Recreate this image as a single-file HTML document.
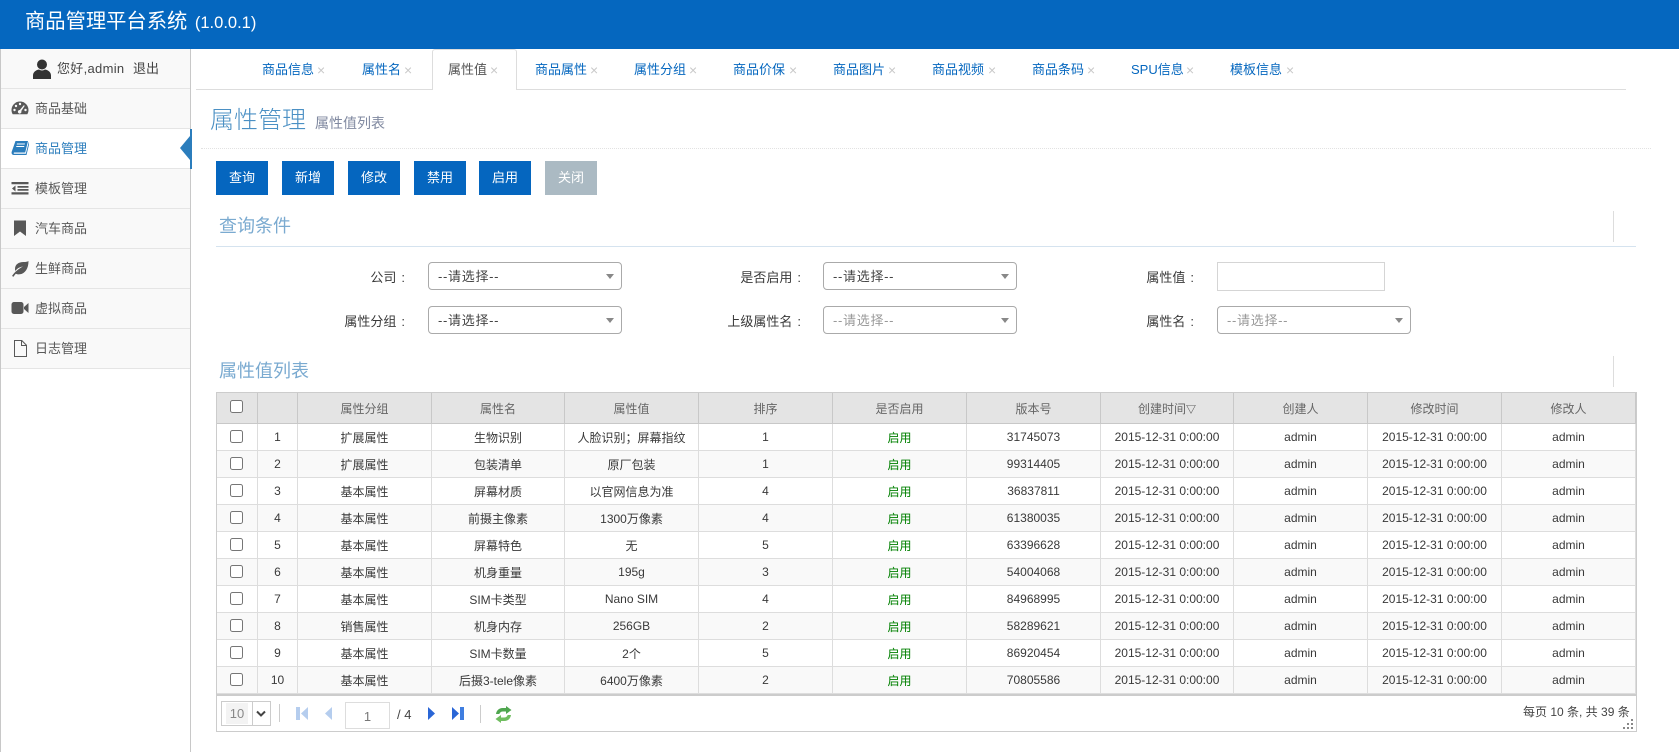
<!DOCTYPE html>
<html lang="zh">
<head>
<meta charset="utf-8">
<title>商品管理平台系统</title>
<style>
html,body{margin:0;padding:0;width:1679px;height:752px;overflow:hidden;background:#fff;}
body{position:relative;font-family:"Liberation Sans","WenQuanYi Zen Hei","Noto Sans CJK SC",sans-serif;font-size:13px;color:#393939;}
.a{position:absolute;white-space:nowrap;}
.hdr{left:0;top:0;width:1679px;height:49px;background:#0567bf;}
.brand{left:25px;top:8px;font-size:20.300px;line-height:28px;color:#fff;}
.side{left:0;top:49px;height:703px;border-left:1px solid #c8c8c8;border-right:1px solid #c8c8c8;width:189px;}
.mi{left:1px;width:189px;height:39px;background:#f9f9f9;border-bottom:1px solid #e5e5e5;line-height:38px;color:#585858;}
.mi span{position:absolute;left:34px;top:1px;}
.mi svg{position:absolute;left:10px;top:10px;width:18px;height:18px;fill:#585858;}
.mi.on{background:#fff;color:#2b7dbc;}
.mi.on svg{fill:#2b7dbc;}
.tabline{left:196px;top:89px;width:1430px;height:1px;background:#ddd;}
.tabon{left:432px;top:49px;width:85px;height:41px;box-sizing:border-box;background:#fff;border:1px solid #ddd;border-bottom:0;border-radius:3px 3px 0 0;}
.t{top:61px;line-height:18px;font-size:13px;color:#0567bf;}
.x{top:61px;line-height:19px;font-size:14px;color:#c9c9c9;}
.h1{left:210px;top:104px;font-size:24px;line-height:34px;color:#4b90c4;font-weight:300;}
.h2{left:315px;top:113px;font-size:14px;line-height:20px;color:#8089a0;}
.dot{left:201px;top:148px;width:1450px;height:0;border-top:1px dotted #e2e2e2;}
.b{top:161px;height:34px;width:52px;background:#0566bf;color:#fff;text-align:center;line-height:33px;font-size:13px;}
.sec{left:219px;font-size:18px;line-height:26px;color:#7aaad0;}
.vl{left:1613px;width:1px;background:#ddd;}
.lb{line-height:18px;font-size:13px;color:#393939;text-align:right;width:100px;}
.lb s{text-decoration:none;margin-left:5px;}
.sel{height:28px;box-sizing:border-box;border:1px solid #aaa;border-radius:4px;background:#fff;line-height:27px;padding-left:9px;color:#444;font-size:13px;letter-spacing:.7px;}
.sel.d{color:#999;}
.sel i{position:absolute;right:7px;top:11px;width:0;height:0;border-left:4px solid transparent;border-right:4px solid transparent;border-top:5px solid #888;}
.inp{left:1217px;top:262px;width:168px;height:29px;box-sizing:border-box;border:1px solid #d5d5d5;background:#fff;}
.grid{left:216px;top:392px;width:1419px;height:338px;border:1px solid #ccc;background:#fff;}
table{border-collapse:separate;border-spacing:0;table-layout:fixed;width:1419px;font-size:12px;}
th,td{padding:0;text-align:center;box-sizing:border-box;overflow:hidden;white-space:nowrap;}
th{height:31px;background:#e4e4e4;color:#666;font-weight:400;border-right:1px solid #c8c8c8;border-bottom:1px solid #c8c8c8;}
td{height:27px;color:#393939;border-right:1px solid #ddd;border-bottom:1px solid #ddd;}
tr:nth-child(even) td{background:#f9f9f9;}
td.g{color:#008000;}
input[type=checkbox]{margin:0;width:13px;height:13px;vertical-align:middle;position:relative;top:-1px;left:-1px;}
th input[type=checkbox]{top:-2px;}
.pg{left:0;top:301px;width:1419px;height:37px;border-top:2px solid #ccc;box-sizing:border-box;}
.sz{left:221px;top:701px;width:50px;height:25px;box-sizing:border-box;border:1px solid #ccc;background:#fff;}
.sep{width:1px;background:#ccc;}
.num{left:345px;top:702px;width:45px;height:27px;box-sizing:border-box;border:1px solid #ddd;text-align:center;line-height:27px;font-size:13px;color:#777;}
</style>
</head>
<body>
<div class="a hdr"></div>
<div class="a brand">商品管理平台系统 <span style="font-size:16.500px;margin-left:2px">(1.0.0.1)</span></div>

<div class="a side"></div>
<div class="a mi" style="top:49px;height:39px;line-height:39px;color:#444">
  <svg style="left:31px;top:10px;width:20px;height:20px;fill:#333" viewBox="0 0 20 20"><circle cx="10" cy="5.500" r="5"/><path d="M1 20v-3.500C1 13 4 11 7 10.500c2 1.300 4 1.300 6 0 3 .5 6 2.500 6 6V20z"/></svg>
  <span style="left:56px;top:0;letter-spacing:.3px">您好,admin</span><span style="left:132px;top:0">退出</span>
</div>
<div class="a mi" style="top:89px;">
  <svg viewBox="0 0 18 18"><path d="M9 2.500C4.300 2.500.5 6.300.5 11c0 1.500.4 3 1.200 4.200h14.600c.8-1.200 1.200-2.700 1.200-4.200 0-4.700-3.800-8.500-8.500-8.500z"/><g fill="#f9f9f9"><circle cx="3.500" cy="11" r="1.200"/><circle cx="5" cy="7" r="1.200"/><circle cx="9" cy="5" r="1.200"/><circle cx="14.500" cy="11" r="1.200"/><path d="M12.800 6.200l1 .6L10.300 12a1.800 1.800 0 1 1-1.500-1z"/></g></svg>
  <span>商品基础</span>
</div>
<div class="a mi on" style="top:129px;">
  <svg viewBox="0 0 18 18"><path d="M4.500 2h12.500l-2.800 11.500H3.500c-1 0-1.200 1-.2 1.200h11.500l3-11.700.7.500-3 12.500H3c-2 0-2.800-1.500-2.300-3.200z"/><path fill="#fff" d="M6 4.500h8l-.3 1H5.700zM5.400 7h8l-.3 1H5.100z"/></svg>
  <span>商品管理</span>
</div>
<div class="a" style="left:190px;top:129px;width:2px;height:40px;background:#2b7dbc"></div>
<div class="a" style="left:180px;top:136px;width:0;height:0;border-top:12.500px solid transparent;border-bottom:12.500px solid transparent;border-right:10px solid #2b7dbc"></div>
<div class="a mi" style="top:169px;">
  <svg viewBox="0 0 18 18"><path d="M.5 3h17v2.200H.5zM6.500 7h11v1.800h-11zM6.500 10h11v1.800h-11zM.5 13.300h17v2.200H.5zM4.500 6.500v6L1 9.500z"/></svg>
  <span>模板管理</span>
</div>
<div class="a mi" style="top:209px;">
  <svg viewBox="0 0 18 18"><path d="M3 1.500h12V17l-6-4.500L3 17z"/></svg>
  <span>汽车商品</span>
</div>
<div class="a mi" style="top:249px;">
  <svg viewBox="0 0 18 18"><path d="M17.500 2c-1 .8-2.500 1-5 1-5 0-8.500 2.500-8.500 7 0 .8.100 1.300.3 2C6 9.500 8.500 8 12 7.500 8 9.500 4 12.500 1 17l1.500.7c.7-1.200 1.500-2.200 2.300-3C6 15.300 7.500 15.500 9 15.300c5-.8 8.500-5.500 8.500-13.300z"/></svg>
  <span>生鲜商品</span>
</div>
<div class="a mi" style="top:289px;">
  <svg viewBox="0 0 18 18"><rect x=".5" y="3" width="12" height="12" rx="2.500"/><path d="M13 8l4.500-4v10L13 10z"/></svg>
  <span>虚拟商品</span>
</div>
<div class="a mi" style="top:329px;">
  <svg viewBox="0 0 18 18"><path d="M3 1h8l5 5v12H3zM4 2v15h11V7h-5V2zM11 2.500V6h3.500z"/></svg>
  <span>日志管理</span>
</div>

<div class="a tabline"></div>
<div class="a tabon"></div>
<div class="a t" style="left:262px">商品信息</div><div class="a x" style="left:317px">×</div>
<div class="a t" style="left:362px">属性名</div><div class="a x" style="left:404px">×</div>
<div class="a t" style="left:448px;color:#555">属性值</div><div class="a x" style="left:490px">×</div>
<div class="a t" style="left:535px">商品属性</div><div class="a x" style="left:590px">×</div>
<div class="a t" style="left:634px">属性分组</div><div class="a x" style="left:689px">×</div>
<div class="a t" style="left:733px">商品价保</div><div class="a x" style="left:789px">×</div>
<div class="a t" style="left:833px">商品图片</div><div class="a x" style="left:888px">×</div>
<div class="a t" style="left:932px">商品视频</div><div class="a x" style="left:988px">×</div>
<div class="a t" style="left:1032px">商品条码</div><div class="a x" style="left:1087px">×</div>
<div class="a t" style="left:1131px">SPU信息</div><div class="a x" style="left:1186px">×</div>
<div class="a t" style="left:1230px">模板信息</div><div class="a x" style="left:1286px">×</div>

<div class="a h1">属性管理</div>
<div class="a h2">属性值列表</div>
<div class="a dot"></div>

<div class="a b" style="left:216px">查询</div>
<div class="a b" style="left:282px">新增</div>
<div class="a b" style="left:348px">修改</div>
<div class="a b" style="left:414px">禁用</div>
<div class="a b" style="left:479px">启用</div>
<div class="a b" style="left:545px;background:#abbac3">关闭</div>

<div class="a sec" style="top:213px">查询条件</div>
<div class="a vl" style="top:211px;height:31px"></div>
<div class="a" style="left:216px;top:246px;width:1420px;height:1px;background:#d5e3ef"></div>

<div class="a lb" style="left:305px;top:269px">公司<s>:</s></div>
<div class="a sel" style="left:428px;top:262px;width:194px">--请选择--<i></i></div>
<div class="a lb" style="left:701px;top:269px">是否启用<s>:</s></div>
<div class="a sel" style="left:823px;top:262px;width:194px">--请选择--<i></i></div>
<div class="a lb" style="left:1094px;top:269px">属性值<s>:</s></div>
<div class="a inp"></div>

<div class="a lb" style="left:305px;top:313px">属性分组<s>:</s></div>
<div class="a sel" style="left:428px;top:306px;width:194px">--请选择--<i></i></div>
<div class="a lb" style="left:701px;top:313px">上级属性名<s>:</s></div>
<div class="a sel d" style="left:823px;top:306px;width:194px">--请选择--<i></i></div>
<div class="a lb" style="left:1094px;top:313px">属性名<s>:</s></div>
<div class="a sel d" style="left:1217px;top:306px;width:194px">--请选择--<i></i></div>

<div class="a sec" style="top:358px">属性值列表</div>
<div class="a vl" style="top:356px;height:31px"></div>

<div class="a grid">
<table>
<colgroup><col style="width:41px"><col style="width:40px"><col style="width:134px"><col style="width:133px"><col style="width:134px"><col style="width:134px"><col style="width:134px"><col style="width:134px"><col style="width:133px"><col style="width:134px"><col style="width:134px"><col style="width:134px"></colgroup>
<thead><tr><th><input type="checkbox"></th><th></th><th>属性分组</th><th>属性名</th><th>属性值</th><th>排序</th><th>是否启用</th><th>版本号</th><th>创建时间<span style="font-size:10px;color:#333">▽</span></th><th>创建人</th><th>修改时间</th><th>修改人</th></tr></thead>
<tbody>
<tr><td><input type="checkbox"></td><td>1</td><td>扩展属性</td><td>生物识别</td><td>人脸识别；屏幕指纹</td><td>1</td><td class="g">启用</td><td>31745073</td><td>2015-12-31 0:00:00</td><td>admin</td><td>2015-12-31 0:00:00</td><td>admin</td></tr>
<tr><td><input type="checkbox"></td><td>2</td><td>扩展属性</td><td>包装清单</td><td>原厂包装</td><td>1</td><td class="g">启用</td><td>99314405</td><td>2015-12-31 0:00:00</td><td>admin</td><td>2015-12-31 0:00:00</td><td>admin</td></tr>
<tr><td><input type="checkbox"></td><td>3</td><td>基本属性</td><td>屏幕材质</td><td>以官网信息为准</td><td>4</td><td class="g">启用</td><td>36837811</td><td>2015-12-31 0:00:00</td><td>admin</td><td>2015-12-31 0:00:00</td><td>admin</td></tr>
<tr><td><input type="checkbox"></td><td>4</td><td>基本属性</td><td>前摄主像素</td><td>1300万像素</td><td>4</td><td class="g">启用</td><td>61380035</td><td>2015-12-31 0:00:00</td><td>admin</td><td>2015-12-31 0:00:00</td><td>admin</td></tr>
<tr><td><input type="checkbox"></td><td>5</td><td>基本属性</td><td>屏幕特色</td><td>无</td><td>5</td><td class="g">启用</td><td>63396628</td><td>2015-12-31 0:00:00</td><td>admin</td><td>2015-12-31 0:00:00</td><td>admin</td></tr>
<tr><td><input type="checkbox"></td><td>6</td><td>基本属性</td><td>机身重量</td><td>195g</td><td>3</td><td class="g">启用</td><td>54004068</td><td>2015-12-31 0:00:00</td><td>admin</td><td>2015-12-31 0:00:00</td><td>admin</td></tr>
<tr><td><input type="checkbox"></td><td>7</td><td>基本属性</td><td>SIM卡类型</td><td>Nano SIM</td><td>4</td><td class="g">启用</td><td>84968995</td><td>2015-12-31 0:00:00</td><td>admin</td><td>2015-12-31 0:00:00</td><td>admin</td></tr>
<tr><td><input type="checkbox"></td><td>8</td><td>销售属性</td><td>机身内存</td><td>256GB</td><td>2</td><td class="g">启用</td><td>58289621</td><td>2015-12-31 0:00:00</td><td>admin</td><td>2015-12-31 0:00:00</td><td>admin</td></tr>
<tr><td><input type="checkbox"></td><td>9</td><td>基本属性</td><td>SIM卡数量</td><td>2个</td><td>5</td><td class="g">启用</td><td>86920454</td><td>2015-12-31 0:00:00</td><td>admin</td><td>2015-12-31 0:00:00</td><td>admin</td></tr>
<tr><td><input type="checkbox"></td><td>10</td><td>基本属性</td><td>后摄3-tele像素</td><td>6400万像素</td><td>2</td><td class="g">启用</td><td>70805586</td><td>2015-12-31 0:00:00</td><td>admin</td><td>2015-12-31 0:00:00</td><td>admin</td></tr>
</tbody>
</table>
<div class="a pg"></div>
</div>

<div class="a sz">
  <div class="a" style="left:4px;top:1px;width:22px;height:21px;background:#f3f3f3;color:#888;font-size:13px;line-height:21px;text-align:center">10</div>
  <div class="a" style="left:30px;top:0;width:1px;height:23px;background:#ccc"></div>
  <svg class="a" style="left:34px;top:8px" width="10" height="8" viewBox="0 0 10 8"><path d="M1 1.500l4 4 4-4" fill="none" stroke="#444" stroke-width="2"/></svg>
</div>
<div class="a sep" style="left:279px;top:704px;height:18px"></div>
<svg class="a" style="left:296px;top:707px" width="12" height="13" viewBox="0 0 12 13"><path d="M0 0h4v13H0z" fill="#b5cdee"/><path d="M12 0v13L5 6.500z" fill="#b5cdee"/></svg>
<svg class="a" style="left:325px;top:707px" width="7" height="13" viewBox="0 0 7 13"><path d="M7 0v13L0 6.500z" fill="#b5cdee"/></svg>
<div class="a num">1</div>
<div class="a" style="left:397px;top:706px;font-size:13px;line-height:18px;color:#444">/ 4</div>
<svg class="a" style="left:428px;top:707px" width="7" height="13" viewBox="0 0 7 13"><path d="M0 0v13l7-6.500z" fill="#2a66d6"/></svg>
<svg class="a" style="left:452px;top:707px" width="12" height="13" viewBox="0 0 12 13"><path d="M0 0v13l7-6.500z" fill="#2a66d6"/><path d="M8 0h4v13H8z" fill="#3f7ee0"/></svg>
<div class="a sep" style="left:480px;top:705px;height:18px"></div>
<svg class="a" style="left:495px;top:706px" width="17" height="17" viewBox="0 0 17 17"><path d="M1 8c.4-3.500 3-6 6.500-6H11V0l5.500 4L11 8V5.500H8C6 5.500 4.800 6.500 4.300 8z" fill="#4fa64f"/><path d="M16 9c-.4 3.500-3 6-6.500 6H6v2L.5 13 6 9v2.500h3c2 0 3.200-1 3.700-2.500z" fill="#70bd60"/></svg>
<div class="a" style="left:1523px;top:703px;font-size:12px;line-height:18px;color:#444">每页 10 条, 共 39 条</div>
<svg class="a" style="left:1623px;top:719px" width="11" height="10" viewBox="0 0 11 10"><g fill="#888"><rect x="8" y="0" width="2" height="2"/><rect x="4" y="4" width="2" height="2"/><rect x="8" y="4" width="2" height="2"/><rect x="0" y="8" width="2" height="2"/><rect x="4" y="8" width="2" height="2"/><rect x="8" y="8" width="2" height="2"/></g></svg>
</body>
</html>
